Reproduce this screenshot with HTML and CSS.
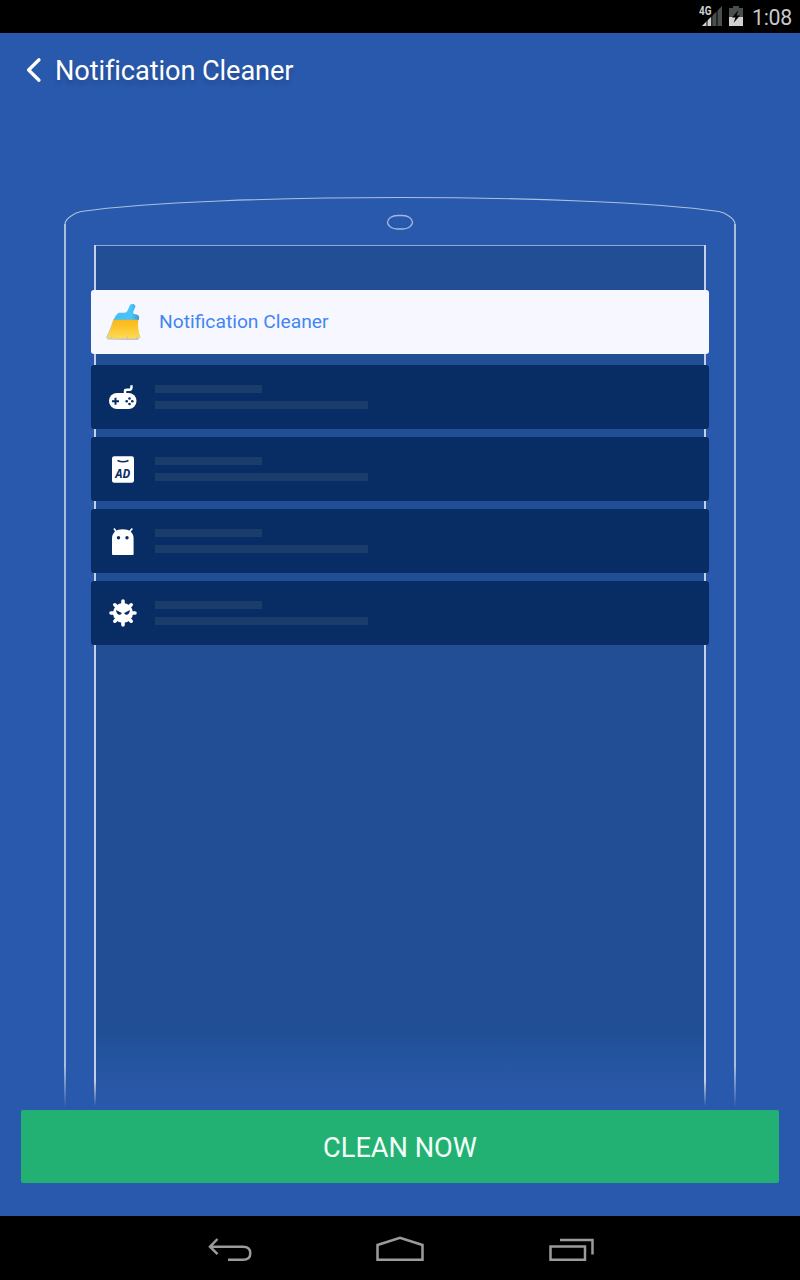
FILE: index.html
```html
<!DOCTYPE html>
<html lang="en">
<head>
<meta charset="utf-8">
<title>Notification Cleaner</title>
<link rel="stylesheet" href="styles.css">
</head>
<body>
<div class="screen">
  <div class="status-bar">
    <svg class="status-icons" width="46" height="24" viewBox="698 4 46 24">
      <path d="M702 26L722 6V26Z" fill="#494f4d"/>
      <path d="M702 26L711.500 16.500V26Z" fill="#d0d0d0"/>
      <path d="M707 5V26M711.800 5V26M717 5V26" stroke="#000" stroke-width="1"/>
      <path d="M698 4H712V15L710 17H698Z" fill="#000"/>
      <text class="network" x="699" y="15" textLength="12.500" lengthAdjust="spacingAndGlyphs">4G</text>
      <path d="M733 6H739V8H743V17H729V8H733Z" fill="#494f4d"/>
      <path d="M729 17H743V26H729Z" fill="#d0d0d0"/>
      <path d="M738.500 10L732 17.500H735.500L733.500 23L740 15.500H736.500Z" fill="#000"/>
    </svg>
    <span class="clock">1:08</span>
  </div>
  <header class="header">
    <svg class="back" width="16" height="26" viewBox="0 0 16 26"><path d="M13 2.800L2.600 13L13 23.200" fill="none" stroke="#fff" stroke-width="3.300" stroke-linecap="round" stroke-linejoin="round"/></svg>
    <h1 class="title">Notification Cleaner</h1>
  </header>
  <main class="stage">
    <svg class="device" width="680" height="920" viewBox="60 190 680 920">
      <defs>
        <linearGradient id="glass" gradientUnits="userSpaceOnUse" x1="0" y1="246" x2="0" y2="1106">
          <stop offset="0" stop-color="#214e94"/>
          <stop offset=".905" stop-color="#214e94"/>
          <stop offset=".938" stop-color="#22539d"/>
          <stop offset=".962" stop-color="#2855a2"/>
          <stop offset="1" stop-color="#2959ac"/>
        </linearGradient>
        <linearGradient id="outer" gradientUnits="userSpaceOnUse" x1="0" y1="1066" x2="0" y2="1107">
          <stop offset="0" stop-color="#a9bfdf"/><stop offset="1" stop-color="#a9bfdf" stop-opacity="0"/>
        </linearGradient>
        <linearGradient id="inner" gradientUnits="userSpaceOnUse" x1="0" y1="1080" x2="0" y2="1106">
          <stop offset="0" stop-color="#c5d0e6"/><stop offset="1" stop-color="#c5d0e6" stop-opacity="0"/>
        </linearGradient>
      </defs>
      <rect x="96" y="246" width="608" height="860" fill="url(#glass)"/>
      <path d="M64 224H66V1107H64ZM734 224H736V1107H734Z" fill="url(#outer)"/>
      <path d="M94 245H96V1106H94ZM704 245H706V1106H704Z" fill="url(#inner)"/>
      <path d="M96 245.500H704" stroke="#91a8d2"/>
      <path d="M65 224C65 219 74 213 81 211.500C145 202 280 197.500 400 197.500S655 202 719 211.500C726 213 735 219 735 224" fill="none" stroke="#a9bfdf" stroke-width="1.100"/>
      <rect x="387.500" y="215.500" width="25" height="13.500" rx="10" ry="6.700" fill="none" stroke="#a3b8df" stroke-width="1.400"/>
    </svg>
    <section class="cards">
      <div class="card card-main">
        <svg class="icon broom" width="40" height="40" viewBox="103 302 40 40">
          <defs>
            <linearGradient id="bristle" x1="0" y1="0" x2="0" y2="1"><stop offset="0" stop-color="#f8b41e"/><stop offset=".5" stop-color="#fdc72c"/><stop offset="1" stop-color="#ffdb58"/></linearGradient>
            <linearGradient id="handle" x1="0" y1="0" x2="1" y2="0"><stop offset="0" stop-color="#40bff7"/><stop offset=".7" stop-color="#4bc4fa"/><stop offset="1" stop-color="#3c98c7"/></linearGradient>
          </defs>
          <path d="M113.500 319H137.500Q137 331 140.500 337L138 340H127L108 339.500L106 337.500Q110 330 113.500 319Z" fill="#9a9992" opacity=".55"/>
          <path d="M114 318.500H138.500Q137 329 140.300 336.500L137.500 338.500L135.500 334L136 338.500H128L127.500 334L126.500 338.500H112L113 334.500L110.500 338.500L107 337.500Q111 329 114 318.500Z" fill="url(#bristle)"/>
          <path d="M113.800 319.700Q115 315.500 118.500 312.700H124.500Q127 312.500 128.300 309L130 305Q131 303.500 133.500 304Q136 305 135.300 307L133.300 311.500Q132.500 314 135.500 314.300Q140 314.500 139 319.700Z" fill="url(#handle)"/>
        </svg>
        <span class="card-title">Notification Cleaner</span>
      </div>
      <div class="card">
        <svg class="icon" width="32" height="32" viewBox="107 381 32 32">
          <rect x="109" y="393" width="27.500" height="16" rx="8" fill="#fff"/>
          <path d="M125 394V391Q125 389.800 127 389.800H129.500Q131.500 389.800 131.500 387V385.200" fill="none" stroke="#fff" stroke-width="2.400"/>
          <path d="M112 401.200H119M115.500 397.700V404.700" stroke="#082c64" stroke-width="2"/>
          <g fill="#082c64"><circle cx="129.500" cy="398.500" r="1.300"/><circle cx="129.500" cy="404" r="1.300"/><circle cx="126.700" cy="401.200" r="1.300"/><circle cx="132.300" cy="401.200" r="1.300"/></g>
        </svg>
        <div class="lines"><i class="line short"></i><i class="line"></i></div>
      </div>
      <div class="card">
        <svg class="icon" width="32" height="32" viewBox="107 453 32 32">
          <rect x="112" y="456.200" width="22" height="26.500" rx="2.200" fill="#fff"/>
          <path d="M117.500 460.500Q123 463 128.500 460.500" fill="none" stroke="#082c64" stroke-width="1.600"/>
          <text class="ad" x="115.200" y="478" textLength="15" lengthAdjust="spacingAndGlyphs">AD</text>
        </svg>
        <div class="lines"><i class="line short"></i><i class="line"></i></div>
      </div>
      <div class="card">
        <svg class="icon" width="32" height="32" viewBox="107 525 32 32">
          <path d="M112 554V538.500C112 532.500 116.500 529.300 122.800 529.300S133.600 532.500 133.600 538.500V554Q133.600 555 132.600 555H113Q112 555 112 554Z" fill="#fff"/>
          <path d="M116.800 532.500L114 528.500M128.800 532.500L132.300 528.500" stroke="#fff" stroke-width="1.700"/>
          <circle cx="118.500" cy="537.700" r="1.700" fill="#082c64"/><circle cx="127" cy="537.700" r="1.700" fill="#082c64"/>
        </svg>
        <div class="lines"><i class="line short"></i><i class="line"></i></div>
      </div>
      <div class="card">
        <svg class="icon" width="32" height="32" viewBox="107 597 32 32">
          <circle cx="123" cy="613" r="10" fill="#fff"/>
          <path d="M123 601V625M111 613H135M114.800 604.800L131.200 621.200M131.200 604.800L114.800 621.200" stroke="#fff" stroke-width="3.600" stroke-linecap="round"/>
          <path d="M116 610L121.800 613Q121.500 614.900 119.400 614.800Q116.700 614.500 116 610ZM130 610L124.200 613Q124.500 614.900 126.600 614.800Q129.300 614.500 130 610Z" fill="#082c64"/>
        </svg>
        <div class="lines"><i class="line short"></i><i class="line"></i></div>
      </div>
    </section>
  </main>
  <button class="clean">CLEAN NOW</button>
  <nav class="nav">
    <svg width="800" height="64" viewBox="0 1216 800 64" fill="none" stroke="#9b9b9b" stroke-width="2.500">
      <path d="M210 1246.700H243Q250.300 1246.700 250.300 1253.200T243 1259.700H228M217.500 1239L210 1246.700L217.500 1254.200"/>
      <path d="M377.500 1259.700V1245L400 1237.700L422.500 1245V1259.700Z"/>
      <path d="M550.500 1246.500H585V1259.700H550.500ZM560 1240H592.500V1254.500"/>
    </svg>
  </nav>
</div>
</body>
</html>
```
FILE: styles.css
```css
* { box-sizing: border-box; }
body { margin: 0; font-family: Roboto, sans-serif; }
.screen {
  width: 800px;
  height: 1280px;
  display: flex;
  flex-direction: column;
  background: #2959ac;
  overflow: hidden;
}
.status-bar {
  height: 33px;
  background: #000;
  display: flex;
  align-items: flex-start;
  justify-content: flex-end;
  gap: 8px;
  padding: 4px 8px 0 0;
}
.network { font: bold 12.500px Roboto, sans-serif; fill: #d0d0d0; }
.clock { width: 40px; color: #c8c8c8; font-size: 21.300px; line-height: 27px; letter-spacing: -.3px; white-space: nowrap; }
.header {
  height: 75px;
  display: flex;
  align-items: center;
  padding-left: 26px;
  gap: 13px;
}
.back { margin-top: -2px; }
.title {
  margin: 0;
  color: #fff;
  font-size: 27.200px;
  font-weight: 400;
  line-height: 32px;
  letter-spacing: -.1px;
  white-space: nowrap;
  text-shadow: 0 4px 4px rgba(0, 0, 0, .15);
}
.stage { position: relative; height: 1002px; padding: 182px 91px 0; }
.device { position: absolute; left: 60px; top: 82px; }
.cards { position: relative; display: flex; flex-direction: column; gap: 8px; }
.card {
  height: 64px;
  display: flex;
  align-items: center;
  border-radius: 3px;
  background: #082c64;
  padding-left: 16px;
  gap: 16px;
}
.card-main { background: #f7f8ff; margin-bottom: 3px; padding-left: 12px; }
.card-title { color: #4285f4; font-size: 19.250px; line-height: 24px; white-space: nowrap; }
.ad { font: italic bold 11.500px "Open Sans", sans-serif; fill: #082c64; }
.lines { display: flex; flex-direction: column; gap: 8px; }
.line { width: 213px; height: 8px; background: #1a3d6b; }
.short { width: 107px; }
.clean {
  width: 758px;
  height: 73px;
  margin: 0 21px 33px;
  padding: 2px 0 0;
  border: 0;
  border-radius: 2px;
  background: #22b173;
  color: #f5fff9;
  font: 400 27.200px Roboto, sans-serif;
}
.nav { height: 64px; background: #000; }
.nav svg { display: block; }
```
